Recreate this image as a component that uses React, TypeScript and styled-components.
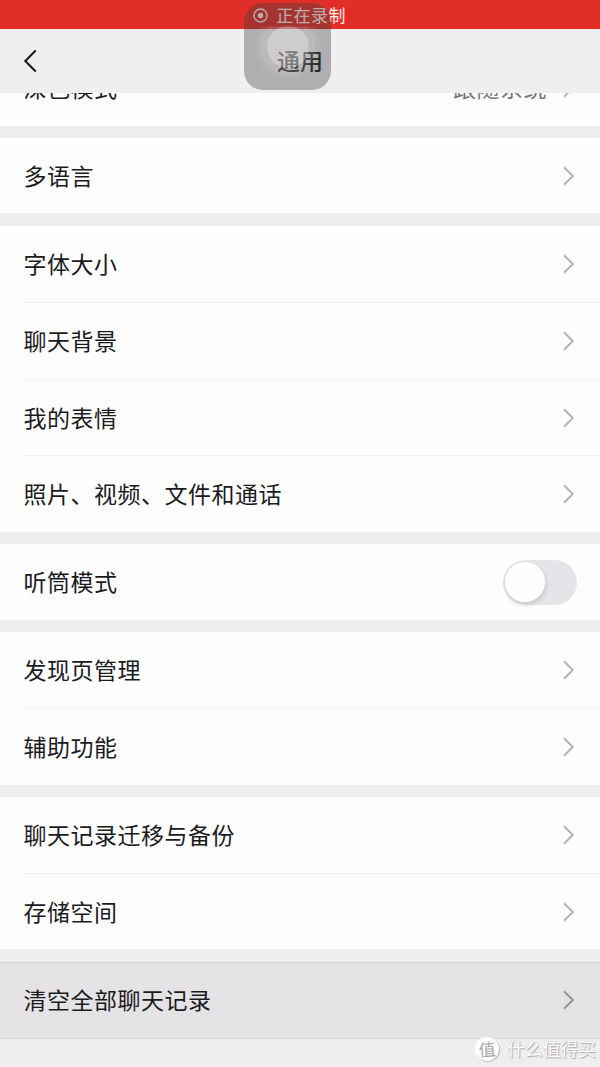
import React from "react";
import styled, { createGlobalStyle, css } from "styled-components";

const GlobalStyle = createGlobalStyle`
  * { box-sizing: border-box; }
  body {
    margin: 0;
    background: #efedf0;
    font-family: "Noto Sans CJK SC", sans-serif;
    color: #1b1a1d;
  }
`;

const Screen = styled.main`
  position: relative;
  display: flex;
  flex-direction: column;
  width: 600px;
  height: 1067px;
  overflow: hidden;
  background: #efedf0;
`;

const StatusBar = styled.div`
  flex: none;
  display: flex;
  align-items: center;
  justify-content: center;
  gap: 8px;
  height: 29px;
  padding: 2px 1px 0 0;
  background: #e12e26;
  color: #fbeceb;
  font-size: 17px;
  line-height: 26px;
  letter-spacing: 0.4px;
`;

const StatusText = styled.span`
  padding-bottom: 2px;
`;

const NavBar = styled.header`
  flex: none;
  display: grid;
  grid-template-columns: 80px 1fr 80px;
  align-items: center;
  height: 64px;
  background: #f0eef1;
`;

const BackIcon = styled.svg`
  display: block;
  margin-left: 23px;
`;

const Title = styled.h1`
  margin: 0;
  padding-bottom: 3px;
  text-align: center;
  font-size: 23px;
  font-weight: 500;
  line-height: 34px;
`;

const List = styled.div`
  flex: 1;
  min-height: 0;
  overflow: hidden;
  display: flex;
  flex-direction: column;
  gap: 12.3px;
`;

const Group = styled.section<{ $clipped?: boolean; $pressed?: boolean }>`
  flex: none;
  background: #fdfdfd;
  ${(p) => p.$clipped && css`margin-top: -43.5px;`}
  ${(p) =>
    p.$pressed &&
    css`
      background: #e5e3e6;
      box-shadow: inset 0 1px #d6d3d6, inset 0 -1px #d9d4d7;
    `}
`;

const Row = styled.div<{ $height: number }>`
  display: flex;
  align-items: center;
  height: ${(p) => p.$height}px;
  padding-right: 25px;
  margin-left: 24px;
  font-size: 23px;
  letter-spacing: 0.5px;
  line-height: 34px;
  & + & {
    border-top: 1px solid #f3f1f3;
  }
`;

const Label = styled.span`
  flex: 1;
  margin-left: -0.5px;
  padding-bottom: 2px;
`;

const Value = styled.span`
  margin-right: 15px;
  padding-bottom: 2px;
  color: #77757a;
`;

const Switch = styled.span`
  width: 74px;
  height: 45px;
  margin-right: -2px;
  padding: 2px;
  border-radius: 23px;
  background: #e6e4e8;
`;

const Knob = styled.span`
  display: block;
  width: 40px;
  height: 40px;
  border-radius: 50%;
  background: #fefefe;
  box-shadow: 1px 3px 5px rgba(70, 60, 75, 0.16);
`;

const TouchButton = styled.div`
  position: absolute;
  left: 244px;
  top: 3px;
  width: 87px;
  height: 87px;
  border-radius: 19px;
  background: rgba(65, 60, 65, 0.36);
  display: grid;
  place-items: center;
`;

const TouchRing = styled.div<{ $size: number; $alpha: number }>`
  grid-area: 1 / 1;
  width: ${(p) => p.$size}px;
  height: ${(p) => p.$size}px;
  border-radius: 50%;
  background: rgba(255, 255, 255, ${(p) => p.$alpha});
  clip-path: inset(${(p) => Math.max(0, (p.$size - 40) / 2)}px 0 0 0);
`;

const Watermark = styled.div`
  position: absolute;
  right: 4px;
  bottom: 4px;
  display: flex;
  align-items: center;
  gap: 8px;
  color: #fff;
  font-size: 17.8px;
  line-height: 26px;
  text-shadow: 1px 1px 1px #aaa7ab, 0 0 1px #bab7bb;
`;

const WatermarkText = styled.span`
  padding-bottom: 2px;
`;

const Seal = styled.span`
  width: 24px;
  height: 24px;
  border-radius: 50%;
  background: #fff;
  box-shadow: 1px 1px 1px #bbb8bc;
  color: #aaa7aa;
  font-size: 17px;
  line-height: 23px;
  text-align: center;
  text-shadow: none;
  transform: rotate(-5deg);
`;

const Chevron = ({ dark }: { dark?: boolean }) => (
  <svg width="13" height="20" viewBox="0 0 13 20" fill="none">
    <path d="M2 1.3 10.8 10 2 18.7" stroke={dark ? "#99969a" : "#b4b2b5"} strokeWidth="2" />
  </svg>
);

type Item = { label: string; value?: string; toggle?: boolean };
type Section = { height: number; clipped?: boolean; pressed?: boolean; items: Item[] };

const sections: Section[] = [
  { height: 76.2, clipped: true, items: [{ label: "深色模式", value: "跟随系统" }] },
  { height: 75.4, items: [{ label: "多语言" }] },
  {
    height: 76.6,
    items: [
      { label: "字体大小" },
      { label: "聊天背景" },
      { label: "我的表情" },
      { label: "照片、视频、文件和通话" },
    ],
  },
  { height: 75.4, items: [{ label: "听筒模式", toggle: true }] },
  { height: 76.35, items: [{ label: "发现页管理" }, { label: "辅助功能" }] },
  { height: 76.1, items: [{ label: "聊天记录迁移与备份" }, { label: "存储空间" }] },
  { height: 77.2, pressed: true, items: [{ label: "清空全部聊天记录" }] },
];

export default function App() {
  return (
    <>
      <GlobalStyle />
      <Screen>
        <StatusBar>
          <svg width="15" height="15" viewBox="0 0 15 15" fill="none">
            <circle cx="7.5" cy="7.5" r="6.5" stroke="#fbeceb" strokeWidth="1.4" />
            <circle cx="7.5" cy="7.5" r="2.7" fill="#fbeceb" />
          </svg>
          <StatusText>正在录制</StatusText>
        </StatusBar>
        <NavBar>
          <BackIcon width="15" height="24" viewBox="0 0 15 24" fill="none">
            <path d="M12.7 1.4 2.3 12 12.7 22.6" stroke="#1b1a1d" strokeWidth="2.1" />
          </BackIcon>
          <Title>通用</Title>
        </NavBar>
        <List>
          {sections.map((section) => (
            <Group
              key={section.items[0].label}
              $clipped={section.clipped}
              $pressed={section.pressed}
            >
              {section.items.map((item) => (
                <Row key={item.label} $height={section.height}>
                  <Label>{item.label}</Label>
                  {item.value && <Value>{item.value}</Value>}
                  {item.toggle ? (
                    <Switch>
                      <Knob />
                    </Switch>
                  ) : (
                    <Chevron dark={section.pressed} />
                  )}
                </Row>
              ))}
            </Group>
          ))}
        </List>
        <TouchButton>
          <TouchRing $size={66} $alpha={0.06} />
          <TouchRing $size={56} $alpha={0.1} />
          <TouchRing $size={42} $alpha={0.28} />
        </TouchButton>
        <Watermark>
          <Seal>值</Seal>
          <WatermarkText>什么值得买</WatermarkText>
        </Watermark>
      </Screen>
    </>
  );
}
